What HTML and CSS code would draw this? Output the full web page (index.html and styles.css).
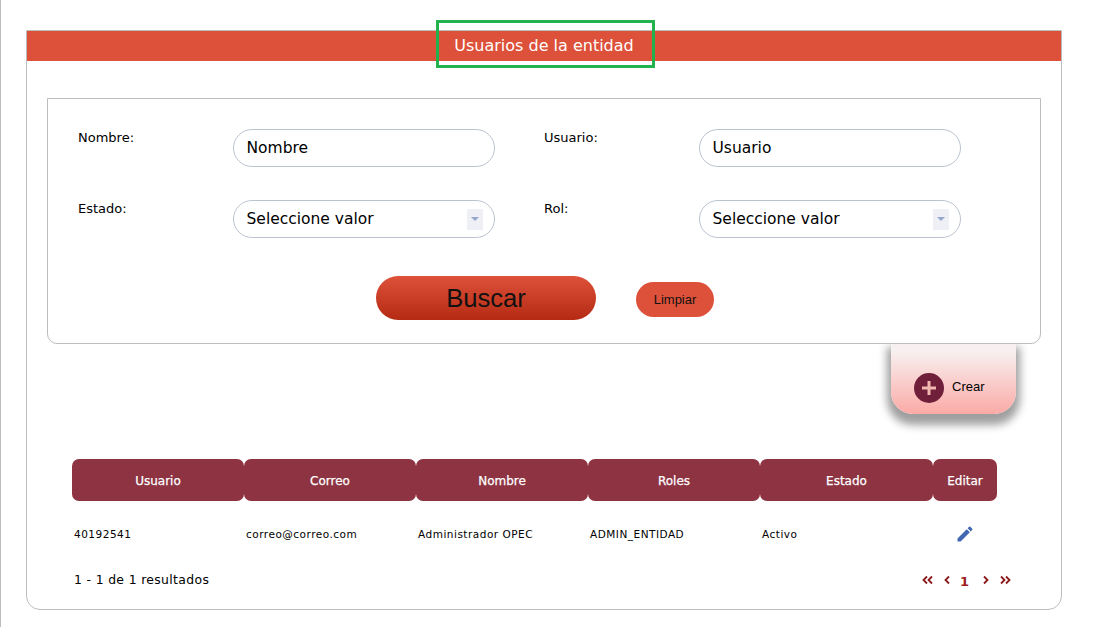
FILE: index.html
```html
<!DOCTYPE html>
<html lang="es">
<head>
<meta charset="utf-8">
<title>Usuarios de la entidad</title>
<link rel="stylesheet" href="styles.css">
</head>
<body>
<div class="page">
  <div class="highlight"></div>
  <section class="card">
    <h1 class="card-title">Usuarios de la entidad</h1>
    <form class="filters">
      <div class="fields">
        <div class="field">
          <label class="field-label">Nombre:</label>
          <input class="control text-input" type="text" value="Nombre">
        </div>
        <div class="field">
          <label class="field-label">Usuario:</label>
          <input class="control text-input" type="text" value="Usuario">
        </div>
        <div class="field">
          <label class="field-label">Estado:</label>
          <div class="control select"><span>Seleccione valor</span><span class="select-arrow"><i class="caret"></i></span></div>
        </div>
        <div class="field">
          <label class="field-label">Rol:</label>
          <div class="control select"><span>Seleccione valor</span><span class="select-arrow"><i class="caret"></i></span></div>
        </div>
      </div>
      <div class="actions">
        <button class="btn-search" type="button">Buscar</button>
        <button class="btn-clear" type="button">Limpiar</button>
      </div>
    </form>
    <div class="create-row">
      <div class="create">
        <span class="create-icon">
          <svg width="30" height="30" viewBox="0 0 30 30"><path d="M15 8v14M8 15h14" stroke="#f0b8b0" stroke-width="3" fill="none"/></svg>
        </span>
        <span class="create-label">Crear</span>
      </div>
    </div>
    <table class="results">
      <thead>
        <tr>
          <th class="col">Usuario</th>
          <th class="col">Correo</th>
          <th class="col">Nombre</th>
          <th class="col">Roles</th>
          <th class="col-state">Estado</th>
          <th class="col-edit">Editar</th>
        </tr>
      </thead>
      <tbody>
        <tr>
          <td>40192541</td>
          <td>correo@correo.com</td>
          <td>Administrador OPEC</td>
          <td>ADMIN_ENTIDAD</td>
          <td>Activo</td>
          <td class="cell-edit">
            <svg width="20" height="20" viewBox="0 0 24 24"><path fill="#4267b2" d="M3 17.25V21h3.75L17.81 9.94l-3.75-3.75L3 17.25zM20.71 7.04c.39-.39.39-1.02 0-1.41l-2.34-2.34c-.39-.39-1.02-.39-1.41 0l-1.83 1.83 3.75 3.75 1.83-1.83z"/></svg>
          </td>
        </tr>
      </tbody>
    </table>
    <div class="pager">
      <span class="pager-count">1 - 1 de 1 resultados</span>
      <nav class="pager-nav">
        <svg class="chev-first" width="11" height="10" viewBox="0 0 11 10"><path d="M5 1.500 1.500 5 5 8.500M10 1.500 6.500 5l3.500 3.500" fill="none" stroke="#8b1a1a" stroke-width="1.800"/></svg>
        <svg width="6" height="10" viewBox="0 0 6 10"><path d="M5 1.500 1.500 5 5 8.500" fill="none" stroke="#8b1a1a" stroke-width="1.800"/></svg>
        <span class="pager-page">1</span>
        <svg width="6" height="10" viewBox="0 0 6 10"><path d="M1 1.500 4.500 5 1 8.500" fill="none" stroke="#8b1a1a" stroke-width="1.800"/></svg>
        <svg class="chev-last" width="11" height="10" viewBox="0 0 11 10"><path d="M1 1.500 4.500 5 1 8.500M6 1.500 9.500 5 6 8.500" fill="none" stroke="#8b1a1a" stroke-width="1.800"/></svg>
      </nav>
    </div>
  </section>
</div>
</body>
</html>
```

FILE: styles.css
```css
* { box-sizing: border-box; }
html, body { margin: 0; height: 100%; overflow: hidden; }
body { background: #fff; color: #000; font-family: "DejaVu Sans", Verdana, sans-serif; }

.page {
  position: relative;
  height: 627px;
  padding: 30px 0 0 26px;
  border-left: 1px solid #bdbdbd;
}
.highlight {
  position: absolute;
  left: 435px;
  top: 20px;
  width: 219px;
  height: 48px;
  border: 3px solid #22b14c;
  z-index: 5;
}
.card {
  width: 1036px;
  margin-left: -1px;
  height: 580px;
  border: 1px solid #bdbdbd;
  border-radius: 0 0 14px 14px;
}
.card-title {
  margin: 0;
  height: 30px;
  background: #dd513a;
  color: #fff;
  font-size: 16px;
  font-weight: 400;
  line-height: 30px;
  text-align: center;
}

.filters {
  position: relative;
  z-index: 2;
  width: 994px;
  height: 246px;
  margin: 37px 0 0 20px;
  padding: 30px 30px 0;
  background: #fff;
  border: 1px solid #bdbdbd;
  border-radius: 0 0 10px 10px;
}
.fields {
  display: grid;
  grid-template-columns: 417px 417px;
  column-gap: 49px;
  row-gap: 33px;
}
.field {
  display: grid;
  grid-template-columns: 155px 262px;
}
.field-label { font-size: 13px; line-height: 16px; padding-top: 1px; }
.control {
  width: 262px;
  height: 38px;
  padding: 0 12.500px;
  border: 1px solid #bcc3d0;
  border-radius: 19px;
  background: #fff;
  color: #000;
  font-family: inherit;
  font-size: 15.500px;
  line-height: 36px;
  outline: none;
}
.text-input { padding-bottom: 1px; }
.select {
  display: flex;
  justify-content: space-between;
  align-items: center;
  padding-right: 11px;
}
.select-arrow {
  display: flex;
  align-items: center;
  justify-content: center;
  width: 16px;
  height: 21px;
  background: #eff0f5;
}
.caret {
  width: 0;
  height: 0;
  border-left: 4px solid transparent;
  border-right: 4px solid transparent;
  border-top: 4px solid #94a7d0;
}

.actions {
  display: flex;
  align-items: center;
  gap: 40px;
  margin: 38px 0 0 298px;
}
.btn-search {
  width: 220px;
  height: 44px;
  border: 0;
  border-radius: 22px;
  background: linear-gradient(#dd513a, #b52a12);
  color: #111;
  font-family: "Liberation Sans", Arial, sans-serif;
  font-size: 25.600px;
}
.btn-clear {
  width: 78px;
  height: 35px;
  margin-top: 3px;
  border: 0;
  border-radius: 18px;
  background: #dd513a;
  color: #111;
  font-family: "Liberation Sans", Arial, sans-serif;
  font-size: 13px;
}

.create-row {
  display: flex;
  justify-content: flex-end;
  padding-right: 45px;
}
.create {
  display: flex;
  align-items: flex-end;
  gap: 8px;
  width: 125px;
  height: 70px;
  padding: 0 0 11px 23px;
  border-radius: 0 0 22px 22px;
  background: linear-gradient(#f7f0f0 10%, #fbaaa6);
  box-shadow: 0 7px 9px 4px rgba(0, 0, 0, .38);
}
.create-icon {
  display: block;
  width: 30px;
  height: 30px;
  border-radius: 50%;
  background: #701f3a;
}
.create-icon svg { display: block; }
.create-label {
  font-family: "Liberation Sans", Arial, sans-serif;
  font-size: 13px;
  line-height: 30px;
  margin-bottom: 1px;
}

.results {
  width: 925px;
  margin: 45px 0 0 45px;
  border-collapse: separate;
  border-spacing: 0;
  table-layout: fixed;
}
.results th {
  height: 42px;
  padding: 2px 0 0;
  border-radius: 7px;
  background: #8e3342;
  color: #fff;
  font-size: 12px;
  font-weight: 400;
  -webkit-text-stroke: .25px #fff;
}
.col { width: 172px; }
.col-state { width: 173px; }
.col-edit { width: 64px; }
.results td {
  height: 66px;
  padding: 0 2px;
  font-size: 10.500px;
  letter-spacing: .5px;
}
.results .cell-edit { padding: 0 0 0 22px; }
.cell-edit svg { display: block; }

.pager {
  display: flex;
  justify-content: space-between;
  align-items: center;
  width: 937px;
  margin: 0 0 0 47px;
  height: 26px;
}
.pager-count { font-size: 12.400px; letter-spacing: .35px; padding-bottom: 2px; }
.pager-nav { display: flex; align-items: center; gap: 10px; }
.pager-nav svg { display: block; }
.chev-first { margin-right: 1px; }
.chev-last { margin-left: 1px; }
.pager-page {
  width: 9px;
  margin: 3px 4px 0 0;
  color: #a01c1c;
  font-size: 13px;
  font-weight: 700;
  line-height: 16px;
  text-align: center;
}
```
